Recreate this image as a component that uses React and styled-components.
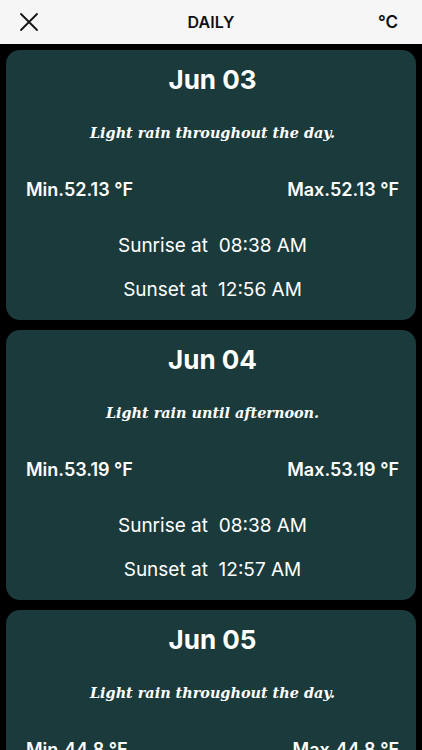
import styled, { createGlobalStyle } from "styled-components";

const GlobalStyle = createGlobalStyle`
  html, body {
    margin: 0;
    padding: 0;
    background: #000;
    font-family: Inter, "Liberation Sans", sans-serif;
  }
`;

const days = [
  { date: "Jun 03", summary: "Light rain throughout the day.", min: "52.13", max: "52.13", sunrise: "08:38 AM", sunset: "12:56 AM" },
  { date: "Jun 04", summary: "Light rain until afternoon.", min: "53.19", max: "53.19", sunrise: "08:38 AM", sunset: "12:57 AM" },
  { date: "Jun 05", summary: "Light rain throughout the day.", min: "44.8", max: "44.8", sunrise: "08:38 AM", sunset: "12:57 AM" },
];

const Screen = styled.div`
  width: 422px;
  height: 750px;
  overflow: hidden;
  background: #000;
`;

const NavBar = styled.header`
  height: 44px;
  background: #f6f6f6;
  display: grid;
  grid-template-columns: 60px 1fr 60px;
  align-items: center;
  color: #111;
`;

const CloseBtn = styled.button`
  border: 0;
  background: none;
  padding: 0 0 0 19px;
  display: flex;
  align-items: center;
  cursor: pointer;
`;

const NavTitle = styled.h1`
  margin: 0;
  text-align: center;
  font-size: 16px;
  font-weight: 600;
  letter-spacing: 0.1px;
`;

const UnitToggle = styled.span`
  text-align: right;
  padding-right: 24px;
  font-size: 17px;
  font-weight: 600;
`;

const List = styled.main`
  display: flex;
  flex-direction: column;
  gap: 10px;
  padding: 6px 6px 0;
`;

const Card = styled.section`
  background: #1b3a3b;
  border-radius: 14px;
  color: #fff;
  display: flex;
  flex-direction: column;
  align-items: center;
  padding: 15px 17px 18px 20px;
  height: 270px;
  box-sizing: border-box;
`;

const DateTitle = styled.h2`
  margin: 0;
  font-size: 26px;
  line-height: 30px;
  font-weight: 700;
`;

const Summary = styled.p`
  margin: 26px 0 0;
  font-family: "DejaVu Serif", "Liberation Serif", serif;
  font-style: italic;
  font-weight: 700;
  font-size: 14.4px;
  line-height: 24px;
`;

const TempRow = styled.div`
  align-self: stretch;
  margin-top: 33px;
  display: flex;
  justify-content: space-between;
  font-size: 18px;
  font-weight: 600;
  line-height: 24px;
`;

const SunLine = styled.p`
  margin: ${(p) => (p.$first ? "32px" : "20px")} 0 0;
  font-size: 19px;
  line-height: 24px;
  white-space: pre;
`;

function CloseIcon() {
  return (
    <svg width="20" height="20" viewBox="0 0 20 20">
      <path d="M2 2 L18 18 M18 2 L2 18" stroke="#111" strokeWidth="1.8" strokeLinecap="round" />
    </svg>
  );
}

function DayCard({ day }) {
  return (
    <Card>
      <DateTitle>{day.date}</DateTitle>
      <Summary>{day.summary}</Summary>
      <TempRow>
        <span>Min.{day.min} °F</span>
        <span>Max.{day.max} °F</span>
      </TempRow>
      <SunLine $first>{`Sunrise at  ${day.sunrise}`}</SunLine>
      <SunLine>{`Sunset at  ${day.sunset}`}</SunLine>
    </Card>
  );
}

export default function App() {
  return (
    <Screen>
      <GlobalStyle />
      <NavBar>
        <CloseBtn aria-label="Close">
          <CloseIcon />
        </CloseBtn>
        <NavTitle>DAILY</NavTitle>
        <UnitToggle>°C</UnitToggle>
      </NavBar>
      <List>
        {days.map((d) => (
          <DayCard key={d.date} day={d} />
        ))}
      </List>
    </Screen>
  );
}
